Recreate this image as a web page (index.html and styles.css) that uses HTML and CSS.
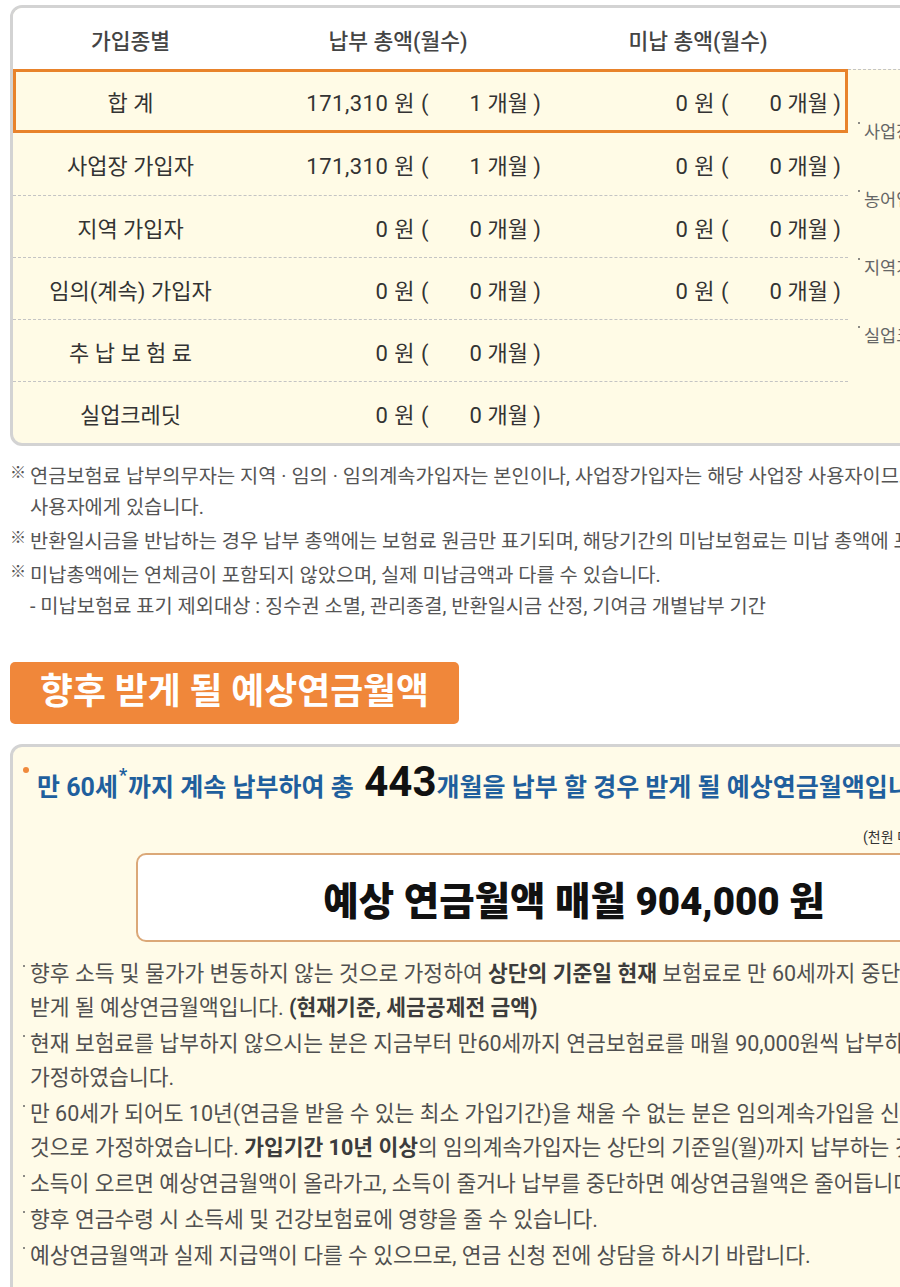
FILE: index.html
```html
<!DOCTYPE html>
<html lang="ko">
<head>
<meta charset="utf-8">
<title>납부 내역 및 예상연금월액</title>
<link rel="stylesheet" href="styles.css">
</head>
<body>
<div class="page">
  <section class="tbl-box">
    <div class="tbl-main">
      <div class="row head">
        <div class="c1">가입종별</div>
        <div class="hc">납부 총액(월수)</div>
        <div class="hc">미납 총액(월수)</div>
      </div>
      <div class="row total">
        <div class="c1">합 계</div>
        <div class="val"><span class="amt">171,310 원 (</span><span class="mon">1 개월 )</span></div>
        <div class="val"><span class="amt">0 원 (</span><span class="mon">0 개월 )</span></div>
      </div>
      <div class="row">
        <div class="c1">사업장 가입자</div>
        <div class="val"><span class="amt">171,310 원 (</span><span class="mon">1 개월 )</span></div>
        <div class="val"><span class="amt">0 원 (</span><span class="mon">0 개월 )</span></div>
      </div>
      <div class="row dash">
        <div class="c1">지역 가입자</div>
        <div class="val"><span class="amt">0 원 (</span><span class="mon">0 개월 )</span></div>
        <div class="val"><span class="amt">0 원 (</span><span class="mon">0 개월 )</span></div>
      </div>
      <div class="row dash">
        <div class="c1">임의(계속) 가입자</div>
        <div class="val"><span class="amt">0 원 (</span><span class="mon">0 개월 )</span></div>
        <div class="val"><span class="amt">0 원 (</span><span class="mon">0 개월 )</span></div>
      </div>
      <div class="row dash">
        <div class="c1">추 납 보 험 료</div>
        <div class="val"><span class="amt">0 원 (</span><span class="mon">0 개월 )</span></div>
        <div class="val"></div>
      </div>
      <div class="row dash">
        <div class="c1">실업크레딧</div>
        <div class="val"><span class="amt">0 원 (</span><span class="mon">0 개월 )</span></div>
        <div class="val"></div>
      </div>
    </div>
    <div class="tbl-side">
      <div class="side-head"></div>
      <ul class="side-list">
        <li>사업장가입자 : 사용자와 근로자가 각각 절반씩 부담</li>
        <li>농어업인 : 보험료 일부 국고지원</li>
        <li>지역가입자 : 본인이 전액 부담</li>
        <li>실업크레딧 : 구직급여 수급기간 중 지원</li>
      </ul>
    </div>
  </section>

  <div class="notes">
    <p class="note"><span class="mk">※</span><span>연금보험료 납부의무자는 지역 · 임의 · 임의계속가입자는 본인이나, 사업장가입자는 해당 사업장 사용자이므로 납부의무가<br>사용자에게 있습니다.</span></p>
    <p class="note"><span class="mk">※</span><span>반환일시금을 반납하는 경우 납부 총액에는 보험료 원금만 표기되며, 해당기간의 미납보험료는 미납 총액에 포함됩니다.</span></p>
    <p class="note"><span class="mk">※</span><span>미납총액에는 연체금이 포함되지 않았으며, 실제 미납금액과 다를 수 있습니다.<br>- 미납보험료 표기 제외대상 : 징수권 소멸, 관리종결, 반환일시금 산정, 기여금 개별납부 기간</span></p>
  </div>

  <h2 class="sec-title">향후 받게 될 예상연금월액</h2>

  <section class="est-box">
    <p class="lead"><span class="dot"></span><span>만 60세<sup>*</sup>까지 계속 납부하여 총<span class="big"> 443</span>개월을 납부 할 경우 받게 될 예상연금월액입니다.</span></p>
    <div class="amount-wrap">
      <div class="unit">(천원 미만 절사)</div>
      <div class="amount">예상 연금월액 매월 904,000 원</div>
    </div>
    <ul class="bullets">
      <li>향후 소득 및 물가가 변동하지 않는 것으로 가정하여 <b>상단의 기준일 현재</b> 보험료로 만 60세까지 중단없이 납부할 경우<br>받게 될 예상연금월액입니다. <b>(현재기준, 세금공제전 금액)</b></li>
      <li>현재 보험료를 납부하지 않으시는 분은 지금부터 만60세까지 연금보험료를 매월 90,000원씩 납부하는 것으로<br>가정하였습니다.</li>
      <li>만 60세가 되어도 10년(연금을 받을 수 있는 최소 가입기간)을 채울 수 없는 분은 임의계속가입을 신청하여 납부하는<br>것으로 가정하였습니다. <b>가입기간 10년 이상</b>의 임의계속가입자는 상단의 기준일(월)까지 납부하는 것으로 가정하였습니다.</li>
      <li>소득이 오르면 예상연금월액이 올라가고, 소득이 줄거나 납부를 중단하면 예상연금월액은 줄어듭니다.</li>
      <li>향후 연금수령 시 소득세 및 건강보험료에 영향을 줄 수 있습니다.</li>
      <li>예상연금월액과 실제 지급액이 다를 수 있으므로, 연금 신청 전에 상담을 하시기 바랍니다.</li>
    </ul>
  </section>
</div>
</body>
</html>
```

FILE: styles.css
```css
html, body {
  margin: 0;
  padding: 0;
  overflow: hidden;
  background: #ffffff;
}

body {
  width: 900px;
  height: 1287px;
  font-family: "Roboto", "Noto Sans CJK KR", sans-serif;
  color: #333333;
}

.page {
  width: 1200px;
}

/* ---------- table ---------- */
.tbl-box {
  display: flex;
  margin: 5px 0 0 10px;
  width: 1130px;
  border: 3px solid #d3d3d3;
  border-radius: 12px;
  background: #fffbe6;
  overflow: hidden;
}

.tbl-main {
  width: 835px;
  flex: none;
}

.row {
  display: grid;
  grid-template-columns: 235px 300px 300px;
  align-items: center;
  height: 62px;
  box-sizing: border-box;
  font-size: 22px;
  color: #333333;
}

.row.head {
  height: 61px;
  background: #ffffff;
  color: #444444;
  font-size: 21.5px;
  font-weight: 500;
  padding-top: 2px;
}

.row.total {
  height: 64px;
  outline: 3px solid #e8832b;
  outline-offset: -3px;
}

.row.dash {
  border-top: 1px dashed #c4c4c4;
}

.c1,
.hc {
  text-align: center;
}

.val {
  display: flex;
}

.amt {
  width: 181px;
  text-align: right;
  white-space: pre;
  letter-spacing: 0.5px;
}

.mon {
  width: 112px;
  text-align: right;
}

.tbl-side {
  flex: 1;
  display: flex;
  flex-direction: column;
}

.side-head {
  height: 61px;
  background: #ffffff;
  flex: none;
}

.side-list {
  flex: 1;
  margin: 0;
  padding: 28px 0 0 10px;
  list-style: none;
  border-top: 1px dashed #c4c4c4;
  font-size: 17.5px;
  line-height: 68px;
  color: #666666;
  white-space: nowrap;
}

.side-list li::before,
.bullets li::before {
  content: "";
  display: inline-block;
  width: 2px;
  height: 2px;
  border-radius: 50%;
  background: #666666;
  vertical-align: top;
}

.side-list li::before {
  margin: 24px 4px 0 0;
}

/* ---------- notes ---------- */
.notes {
  margin: 15px 0 0 10px;
  font-size: 19.8px;
  line-height: 31px;
  color: #555555;
  white-space: nowrap;
}

.note {
  display: flex;
  margin: 0 0 3px;
}

.mk {
  width: 20px;
  flex: none;
  font-size: 16px;
  color: #555555;
  line-height: 24px;
}

/* ---------- section title ---------- */
.sec-title {
  display: inline-block;
  margin: 37px 0 0 10px;
  padding: 0 30px;
  height: 62px;
  line-height: 60px;
  border-radius: 5px;
  background: #f0873a;
  color: #ffffff;
  font-size: 35.8px;
  font-weight: 700;
}

/* ---------- estimate box ---------- */
.est-box {
  margin: 20px 0 0 10px;
  width: 1160px;
  min-height: 620px;
  border: 3px solid #d3d3d3;
  border-radius: 12px;
  background: #fffbe8;
  padding: 0 0 0 10px;
  box-sizing: border-box;
}

.lead {
  display: flex;
  align-items: flex-start;
  margin: 0;
  padding-top: 12px;
  font-size: 25px;
  font-weight: 700;
  color: #1f5f9d;
  white-space: nowrap;
  line-height: 46px;
}

.dot {
  flex: none;
  width: 6px;
  height: 6px;
  border-radius: 50%;
  background: #f08a3c;
  margin: 8px 8px 0 0;
}

.lead sup {
  font-size: 18px;
  vertical-align: top;
  line-height: 32px;
  padding: 0 1px;
}

.big {
  font-size: 42px;
  color: #111111;
  white-space: pre;
}

.amount-wrap {
  margin: 17px 0 0 113px;
  width: 876px;
}

.unit {
  padding: 0 0 0 727px;
  font-size: 14px;
  line-height: 18px;
  color: #333333;
  white-space: nowrap;
}

.amount {
  margin-top: 7px;
  height: 89px;
  box-sizing: border-box;
  border: 2px solid #dba878;
  border-radius: 10px;
  background: #ffffff;
  display: flex;
  align-items: center;
  justify-content: center;
  font-size: 38.5px;
  font-weight: 900;
  color: #111111;
  white-space: nowrap;
}

.bullets {
  list-style: none;
  margin: 15px 0 0;
  padding: 0;
  font-size: 21.5px;
  line-height: 34px;
  color: #505050;
  white-space: nowrap;
}

.bullets li {
  margin-bottom: 2px;
  text-indent: -7px;
  padding-left: 7px;
}

.bullets li::before {
  margin: 8px 5px 0 0;
}

.bullets b {
  color: #3c3c3c;
  font-weight: 700;
}
```
